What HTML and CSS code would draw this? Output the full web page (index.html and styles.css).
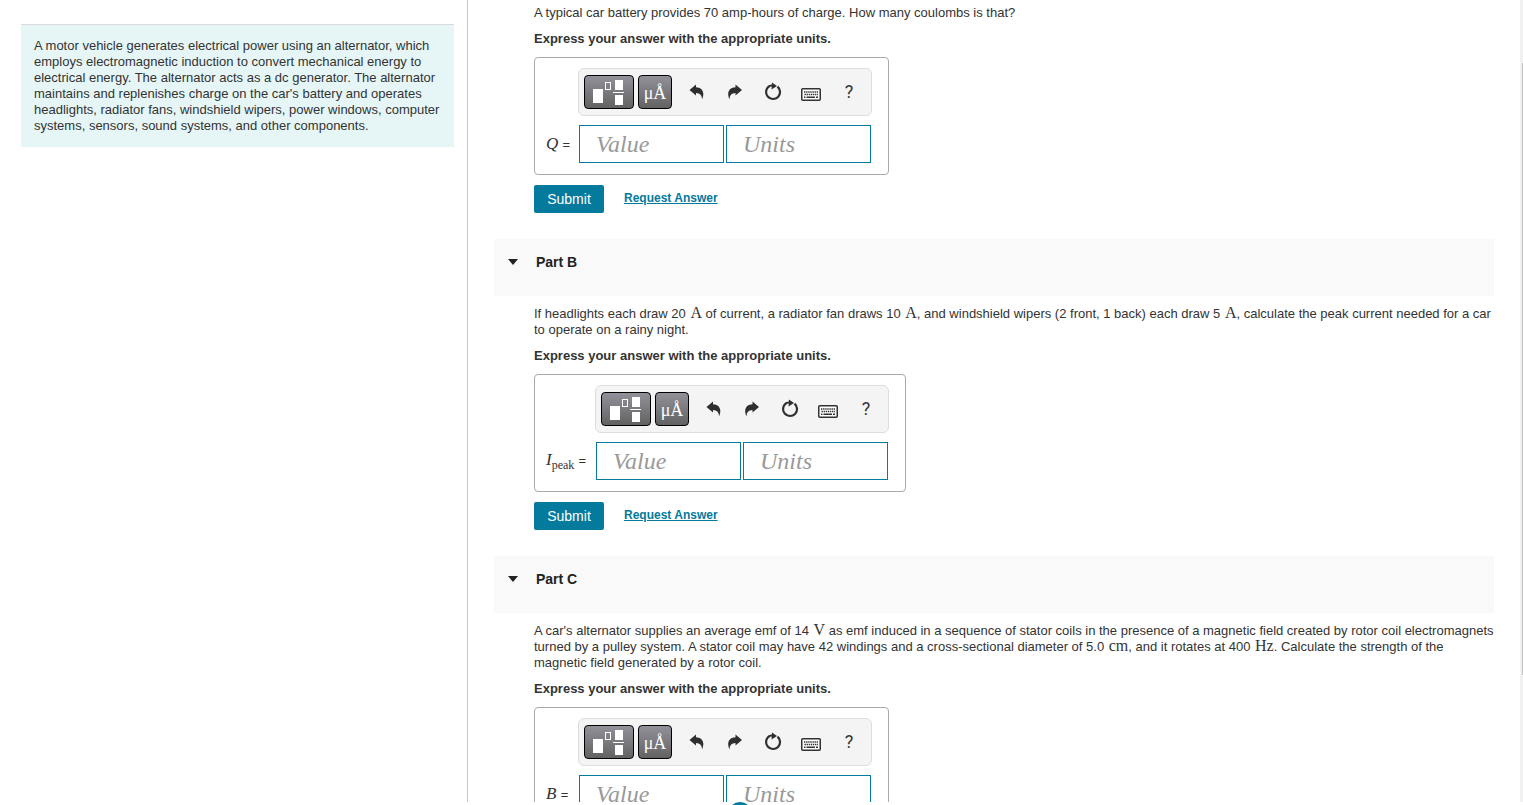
FILE: index.html
```html
<!DOCTYPE html>
<html lang="en">
<head>
<meta charset="utf-8">
<title>Car alternator problem</title>
<link rel="stylesheet" href="styles.css">
</head>
<body>
<svg class="defs" aria-hidden="true">
  <symbol id="i-template" viewBox="0 0 32 26">
    <rect x="0" y="10" width="10" height="14" fill="#fff"/>
    <rect x="12.5" y="3.5" width="5" height="7" fill="none" stroke="#fff"/>
    <rect x="22" y="1" width="8" height="10" fill="#fff"/>
    <rect x="20" y="13" width="11" height="1" fill="#fff"/>
    <rect x="22" y="16" width="8" height="10" fill="#fff"/>
  </symbol>
  <symbol id="i-undo" viewBox="0 0 16 16">
    <path d="M0.500 6 L7 0.500 V3.300 C12.500 3.600 16.500 7.500 13 15.500 C13 11.500 11 9.200 7 9 V11.500 Z" fill="#2f2f2f"/>
  </symbol>
  <symbol id="i-redo" viewBox="0 0 16 16">
    <path d="M15 6 L8.500 0.500 V3.300 C3 3.600 -1 7.500 2.500 15.500 C2.500 11.500 4.500 9.200 8.500 9 V11.500 Z" fill="#2f2f2f"/>
  </symbol>
  <symbol id="i-reset" viewBox="0 0 18 20">
    <path d="M5 4.300 A7 7 0 1 0 13.500 4.600" fill="none" stroke="#2f2f2f" stroke-width="2.200"/>
    <path d="M8 0.500 L13 4 L7.500 7.500 Z" fill="#2f2f2f"/>
    <path d="M4 5 Q6 3 9 3.500" fill="none" stroke="#2f2f2f" stroke-width="2"/>
  </symbol>
  <symbol id="i-keyboard" viewBox="0 0 20 13">
    <rect x="0.750" y="0.750" width="18.500" height="11.500" rx="1" fill="#fff" stroke="#333" stroke-width="1.500"/>
    <path d="M3 4 H17 M3.500 6.500 H17" stroke="#333" stroke-width="1.500" stroke-dasharray="1.400 0.700"/>
    <path d="M3 9.300 H4.500 M5.500 9.300 H14 M15 9.300 H17" stroke="#333" stroke-width="1.500"/>
  </symbol>
</svg>
<div class="page">
  <aside class="side">
    <p class="intro">A motor vehicle generates electrical power using an alternator, which employs electromagnetic induction to convert mechanical energy to electrical energy. The alternator acts as a dc generator. The alternator maintains and replenishes charge on the car's battery and operates headlights, radiator fans, windshield wipers, power windows, computer systems, sensors, sound systems, and other components.</p>
  </aside>
  <main class="content">
    <section class="part part-first">
      <p class="question">A typical car battery provides 70 amp-hours of charge. How many coulombs is that?</p>
      <p class="instruction">Express your answer with the appropriate units.</p>
      <div class="answer">
        <div class="toolbar">
          <button class="tool tool-wide" aria-label="Templates"><svg width="32" height="26"><use href="#i-template"/></svg></button>
          <button class="tool" aria-label="Units symbols">μÅ</button>
          <div class="actions">
            <button class="action" aria-label="Undo"><svg width="16" height="16"><use href="#i-undo"/></svg></button>
            <button class="action" aria-label="Redo"><svg width="16" height="16"><use href="#i-redo"/></svg></button>
            <button class="action" aria-label="Reset"><svg width="18" height="20"><use href="#i-reset"/></svg></button>
            <button class="action action-keys" aria-label="Keyboard shortcuts"><svg width="20" height="13"><use href="#i-keyboard"/></svg></button>
            <button class="action" aria-label="Help">?</button>
          </div>
        </div>
        <label class="symbol" for="value-a"><i>Q</i> <span class="eq">=</span></label>
        <div class="fields">
          <input class="field" id="value-a" placeholder="Value">
          <input class="field" aria-label="Units" placeholder="Units">
        </div>
      </div>
      <div class="controls"><button class="submit">Submit</button><a class="request" href="#">Request Answer</a></div>
    </section>

    <section class="part">
      <h2 class="heading"><span class="caret"></span>Part B</h2>
      <p class="question">If headlights each draw 20 <span class="math">A</span> of current, a radiator fan draws 10 <span class="math">A</span>, and windshield wipers (2 front, 1 back) each draw 5 <span class="math">A</span>, calculate the peak current needed for a car to operate on a rainy night.</p>
      <p class="instruction">Express your answer with the appropriate units.</p>
      <div class="answer">
        <div class="toolbar">
          <button class="tool tool-wide" aria-label="Templates"><svg width="32" height="26"><use href="#i-template"/></svg></button>
          <button class="tool" aria-label="Units symbols">μÅ</button>
          <div class="actions">
            <button class="action" aria-label="Undo"><svg width="16" height="16"><use href="#i-undo"/></svg></button>
            <button class="action" aria-label="Redo"><svg width="16" height="16"><use href="#i-redo"/></svg></button>
            <button class="action" aria-label="Reset"><svg width="18" height="20"><use href="#i-reset"/></svg></button>
            <button class="action action-keys" aria-label="Keyboard shortcuts"><svg width="20" height="13"><use href="#i-keyboard"/></svg></button>
            <button class="action" aria-label="Help">?</button>
          </div>
        </div>
        <label class="symbol symbol-sub" for="value-b"><i>I</i><sub>peak</sub> <span class="eq">=</span></label>
        <div class="fields">
          <input class="field" id="value-b" placeholder="Value">
          <input class="field" aria-label="Units" placeholder="Units">
        </div>
      </div>
      <div class="controls"><button class="submit">Submit</button><a class="request" href="#">Request Answer</a></div>
    </section>

    <section class="part">
      <h2 class="heading"><span class="caret"></span>Part C</h2>
      <p class="question">A car's alternator supplies an average emf of 14 <span class="math">V</span> as emf induced in a sequence of stator coils in the presence of a magnetic field created by rotor coil electromagnets turned by a pulley system. A stator coil may have 42 windings and a cross-sectional diameter of 5.0 <span class="math">cm</span>, and it rotates at 400 <span class="math">Hz</span>. Calculate the strength of the magnetic field generated by a rotor coil.</p>
      <p class="instruction">Express your answer with the appropriate units.</p>
      <div class="answer">
        <div class="toolbar">
          <button class="tool tool-wide" aria-label="Templates"><svg width="32" height="26"><use href="#i-template"/></svg></button>
          <button class="tool" aria-label="Units symbols">μÅ</button>
          <div class="actions">
            <button class="action" aria-label="Undo"><svg width="16" height="16"><use href="#i-undo"/></svg></button>
            <button class="action" aria-label="Redo"><svg width="16" height="16"><use href="#i-redo"/></svg></button>
            <button class="action" aria-label="Reset"><svg width="18" height="20"><use href="#i-reset"/></svg></button>
            <button class="action action-keys" aria-label="Keyboard shortcuts"><svg width="20" height="13"><use href="#i-keyboard"/></svg></button>
            <button class="action" aria-label="Help">?</button>
          </div>
        </div>
        <label class="symbol" for="value-c"><i>B</i> <span class="eq">=</span></label>
        <div class="fields">
          <input class="field" id="value-c" placeholder="Value">
          <input class="field" aria-label="Units" placeholder="Units">
        </div>
      </div>
    </section>
  </main>
  <div class="scrollbar"><div class="thumb"></div></div>
</div>
<span class="badge"></span>
</body>
</html>
```

FILE: styles.css
```css
* { box-sizing: border-box; }
body {
  margin: 0;
  height: 100vh;
  padding-bottom: 3px;
  overflow: hidden;
  position: relative;
  background: #fff;
  color: #333;
  font: 12px/16px "Liberation Sans", Arial, sans-serif;
}
p, h2 { margin: 0; }
.defs { position: absolute; width: 0; height: 0; }
.page { display: flex; height: 100%; overflow: hidden; }
.side {
  flex: 0 0 468px;
  padding: 24px 13px 0 21px;
  border-right: 1px solid #bdc8d9;
}
.intro { padding: 13px; background: #e6f6f7; border-top: 1px solid #dadada; font-size: 13px; }
.content { flex: 1; min-width: 0; padding: 5px 26px 0; }
.part { margin-bottom: 26px; }
.question, .instruction, .answer, .controls { margin-left: 40px; }
.question { font-size: 13px; }
.instruction { margin-top: 10px; font-size: 13px; font-weight: 700; }
.math { margin-left: 1px; font: 16px/14px "Liberation Serif", serif; }
.heading {
  display: flex;
  align-items: center;
  height: 57px;
  padding: 0 14px 11px;
  margin-bottom: 10px;
  background: #f9f9f9;
  color: #222;
  font-size: 14px;
}
.caret {
  margin-right: 18px;
  border: 5px solid transparent;
  border-top: 6px solid #222;
  border-bottom: 0;
}
.answer {
  display: grid;
  grid-template-columns: auto 294px;
  width: max-content;
  row-gap: 9px;
  margin-top: 10px;
  padding: 10px 16px 11px 11px;
  border: 1px solid #aaa;
  border-radius: 4px;
}
.toolbar {
  grid-column: 2;
  display: flex;
  align-items: center;
  gap: 4px;
  height: 48px;
  padding-left: 5px;
  background: #f4f4f4;
  border: 1px solid #ddd;
  border-radius: 6px;
}
.tool {
  display: grid;
  place-items: center;
  flex: none;
  width: 34px;
  height: 34px;
  padding: 2px 0 0;
  border: 1px solid #000;
  border-radius: 4px;
  background: linear-gradient(#92919a, #626262);
  color: #fff;
  font: 18px/30px "Liberation Serif", serif;
}
.tool-wide { width: 50px; padding: 0; }
.actions { display: flex; padding-left: 2px; }
.action {
  display: grid;
  place-items: center;
  width: 38px;
  height: 34px;
  padding: 0;
  border: 0;
  background: none;
  color: #333;
  font: 18px/34px Roboto, sans-serif;
}
.action-keys { padding-top: 4px; }
.symbol {
  align-self: center;
  min-width: 32px;
  font: 17px/20px "Liberation Serif", serif;
  white-space: nowrap;
}
.symbol-sub { min-width: 49px; }
.symbol sub { font-size: 12px; line-height: 12px; }
.eq { font: 13px "Liberation Sans", sans-serif; }
.fields { display: flex; gap: 2px; padding: 0 1px; }
.field {
  width: 145px;
  height: 38px;
  padding: 0 16px;
  border: 1px solid #047a9c;
  border-radius: 0;
  background: #fff;
  font: italic 24px "Liberation Serif", serif;
}
.field::placeholder { color: #999; opacity: 1; }
.controls { display: flex; align-items: flex-start; gap: 20px; margin-top: 10px; }
.submit {
  width: 70px;
  height: 28px;
  padding: 0;
  border: 0;
  border-radius: 2px;
  background: #047a9c;
  color: #fff;
  font: 14px "Liberation Sans", sans-serif;
}
.request { margin-top: 5px; color: #047a9c; font-weight: 700; }
.scrollbar { flex: 0 0 3px; padding: 63px 0 127px 2px; background: #f1f1f1; }
.thumb { height: 100%; background: #c1c1c1; }
.badge {
  position: absolute;
  left: 728px;
  bottom: -21px;
  width: 24px;
  height: 24px;
  border-radius: 50%;
  background: #047a9c;
}
```
